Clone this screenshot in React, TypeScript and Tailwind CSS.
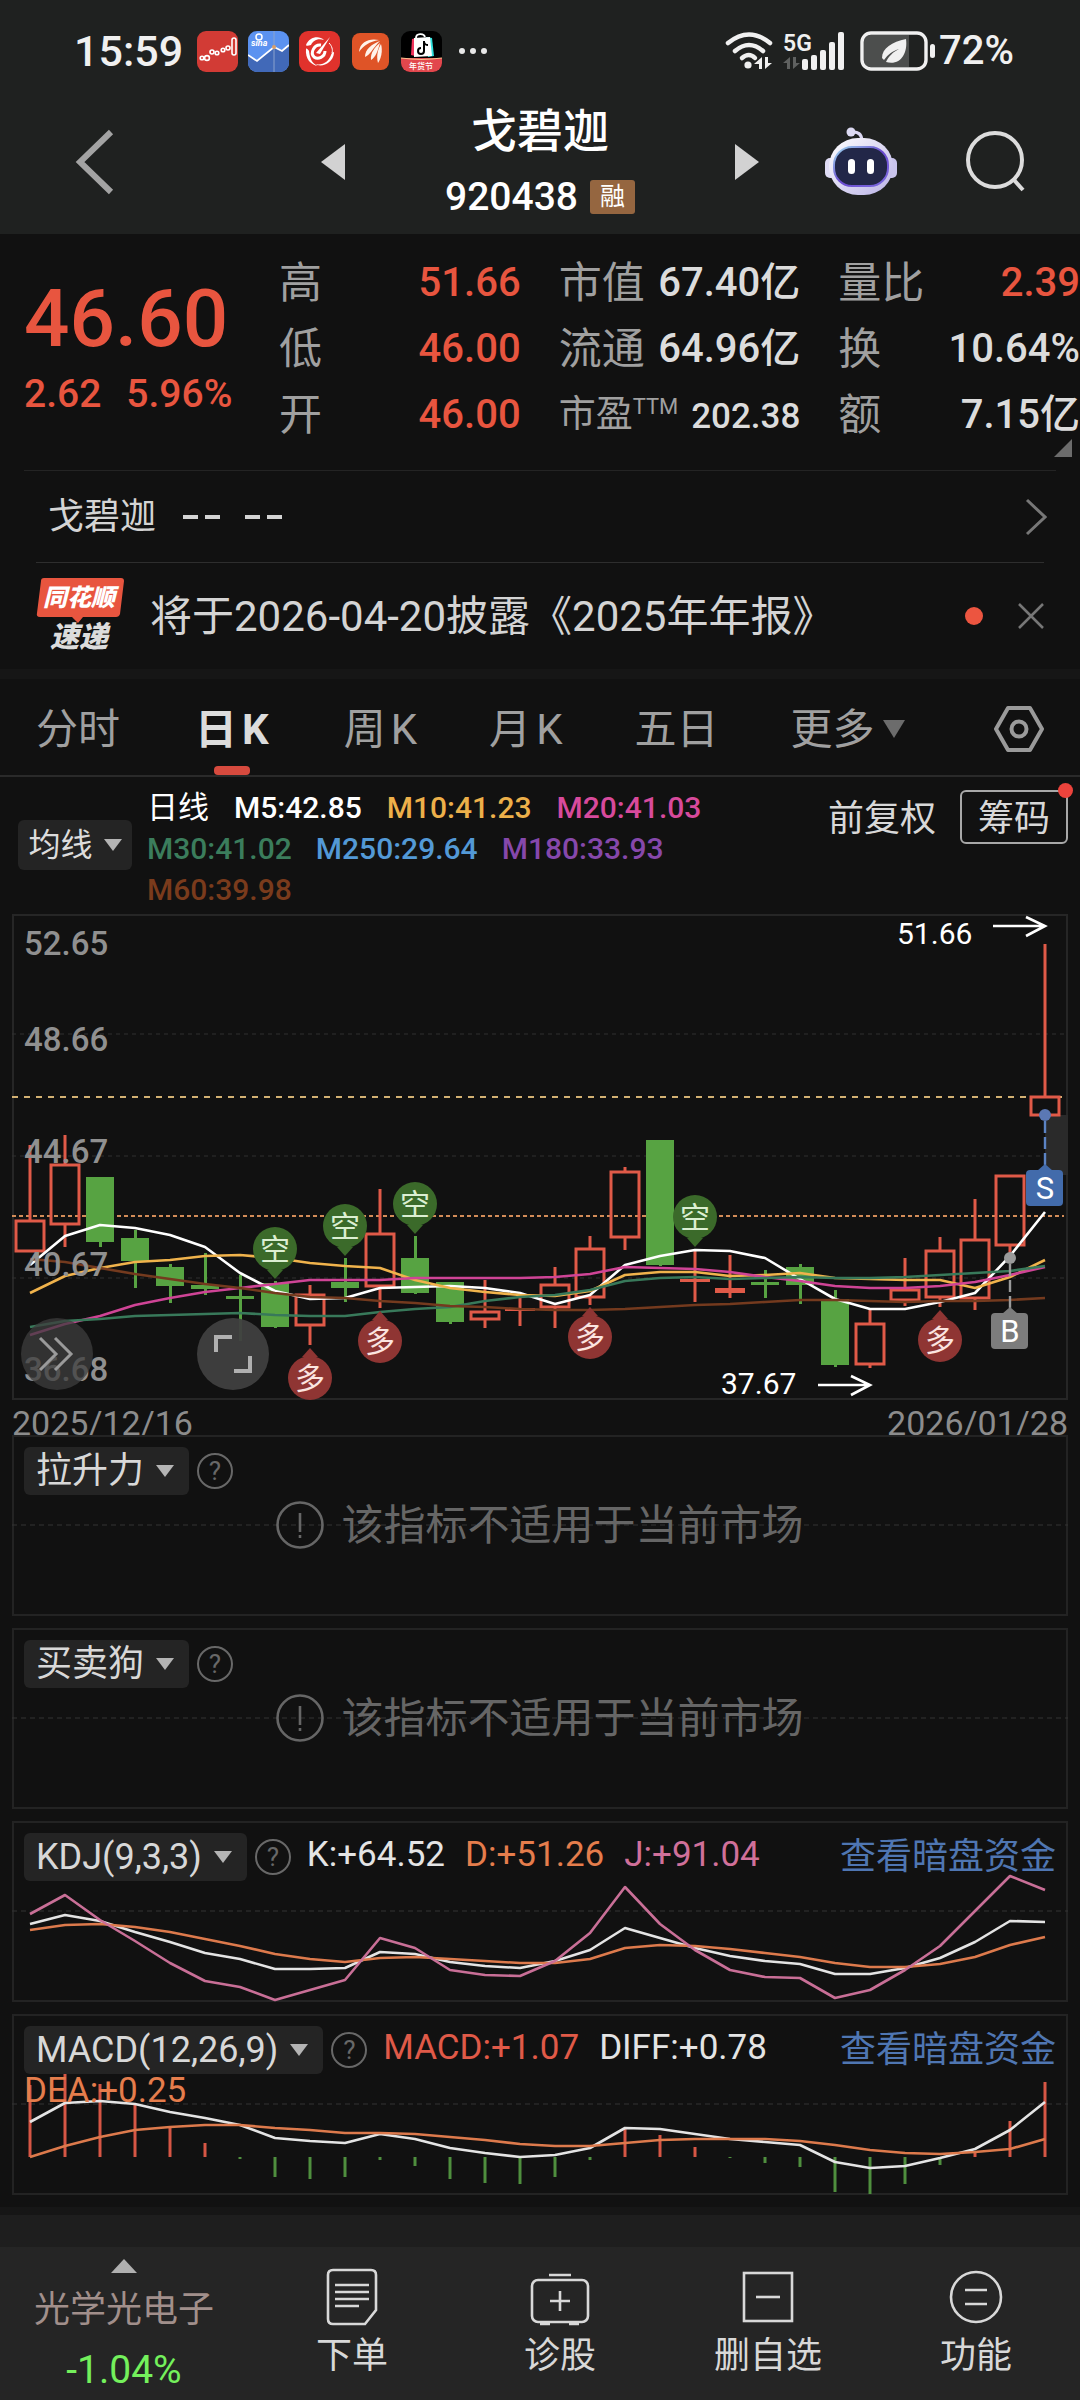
import type { ReactNode } from 'react';

// [up, high, bodyTop, bodyBottom, low] in chart units
const CANDLES: [boolean, number, number, number, number][] = [
  [true, 231, 306, 338, 338],
  [true, 221, 250, 311, 333],
  [false, 263, 263, 328, 333],
  [false, 316, 324, 347, 374],
  [false, 350, 353, 372, 389],
  [false, 339, 371, 375, 381],
  [false, 361, 382, 385, 427],
  [false, 367, 369, 413, 414],
  [true, 371, 380, 412, 431],
  [false, 344, 368, 374, 388],
  [true, 275, 319, 373, 394],
  [false, 322, 344, 379, 380],
  [false, 368, 368, 408, 410],
  [true, 366, 397, 406, 414],
  [true, 382, 394, 397, 412],
  [true, 353, 370, 394, 414],
  [true, 322, 334, 384, 391],
  [true, 253, 257, 324, 336],
  [false, 226, 226, 351, 352],
  [true, 337, 365, 368, 388],
  [true, 341, 374, 379, 384],
  [false, 356, 368, 371, 384],
  [false, 350, 353, 371, 390],
  [false, 376, 385, 451, 453],
  [true, 396, 409, 451, 454],
  [true, 344, 375, 387, 392],
  [true, 323, 336, 384, 393],
  [true, 285, 325, 385, 396],
  [true, 261, 261, 332, 342],
  [true, 30, 182, 202, 202],
];

const MA_LINES = [
  { color: '#fff', ys: [351,322,311,314,321,333,359,377,385,384,374,373,372,374,379,390,381,351,342,336,337,344,365,385,395,395,388,379,342,298] },
  { color: '#f0b34c', ys: [379,362,354,348,346,342,341,344,349,352,354,366,374,378,381,382,377,361,358,358,362,361,359,364,365,366,366,374,363,346] },
  { color: '#cf4496', ys: [421,410,402,391,384,378,374,370,366,366,366,364,364,364,364,363,360,353,354,355,358,363,367,372,374,374,372,368,361,353] },
  { color: '#38795a', ys: [413,407,405,402,401,400,399,401,402,402,398,395,393,387,383,381,376,367,364,363,365,364,363,364,364,363,361,359,357,352] },
  { color: '#743a1e', ys: [345,348,354,360,365,370,374,379,383,384,387,389,392,393,395,396,396,395,393,391,390,388,386,386,387,388,387,387,386,384] },
];

const KDJ_LINES = [
  { color: '#e4e4e4', ys: [103,94,100,111,121,132,138,148,148,147,131,133,141,145,147,140,129,107,117,127,135,140,143,153,153,147,137,121,100,101] },
  { color: '#dd7a4c', ys: [109,104,103,106,111,118,125,133,138,141,137,136,138,140,142,142,138,127,124,125,128,132,136,142,146,146,143,136,124,116] },
  { color: '#c96f97', ys: [93,74,99,120,142,160,166,179,169,159,117,127,149,154,155,140,112,66,103,129,149,156,157,177,169,149,125,90,55,69] },
];

const MACD_LINES = [
  { color: '#e4e4e4', ys: [108,89,87,90,98,104,111,124,127,129,120,125,134,139,143,141,134,114,115,120,125,128,131,148,154,152,144,135,116,88] },
  { color: '#dd7a4c', ys: [143,132,123,116,113,111,111,114,116,119,119,120,123,126,130,132,132,129,126,125,125,125,127,131,136,139,140,138,135,125] },
];
const MACD_BARS = [71,53,70,90,113,129,145,163,165,163,146,152,165,169,170,163,146,115,121,133,144,149,153,178,180,170,151,137,107,68];
const MACD_ZERO = 143;

const RED = '#e05a48';
const GREEN = '#57a342';

const cx = (i: number) => 18 + 35 * i;
const toPoints = (ys: number[]) => ys.map((y, i) => `${cx(i)},${y}`).join(' ');

function Lines({ lines }: { lines: { color: string; ys: number[] }[] }) {
  return (
    <>
      {lines.map(l => (
        <polyline key={l.color} points={toPoints(l.ys)} fill="none" stroke={l.color} strokeWidth="2.6" strokeLinejoin="round" />
      ))}
    </>
  );
}

function AppIcons() {
  return (
    <div className="flex items-center gap-[10px]">
      <svg viewBox="0 0 41 41" className="w-[41px] h-[41px]">
        <rect width="41" height="41" rx="9" fill="#d23b35" />
        <g fill="none" stroke="#fff" strokeWidth="1.6">
          <circle cx="5" cy="27" r="1.8" /><circle cx="10" cy="27" r="2.4" /><circle cx="15" cy="21" r="2" />
          <circle cx="20" cy="22" r="1.8" /><circle cx="26" cy="19" r="1.8" /><circle cx="31" cy="17" r="2" />
          <rect x="35" y="7" width="4" height="17" rx="2" />
        </g>
      </svg>
      <svg viewBox="0 0 41 41" className="w-[41px] h-[41px]">
        <rect width="41" height="41" rx="9" fill="#5b92f0" />
        <path d="M0 24l9 6 17-14 8 4 7-6v18a9 9 0 0 1-9 9H9a9 9 0 0 1-9-9z" fill="#4169b8" />
        <path d="M0 24l9 6 17-14 8 4 7-6" fill="none" stroke="#fff" strokeWidth="1.8" />
        <path d="M26 0v41" stroke="#8ba3cd" strokeWidth="1" />
        <circle cx="26" cy="16" r="2" fill="#d9a06a" />
        <circle cx="11" cy="6" r="3" fill="none" stroke="#fff" strokeWidth="1.5" />
        <text x="3" y="15" fontSize="9" fontWeight="700" fontStyle="italic" fill="#fff">sina</text>
      </svg>
      <svg viewBox="0 0 41 41" className="w-[41px] h-[41px]">
        <rect width="41" height="41" rx="9" fill="#e0322c" />
        <path d="M7 14C10 6 20 4 25 9c-7-2-11 1-13 5-3 1-5 1-5 0z" fill="#fff" />
        <path d="M7 18c-1 10 5 16 12 17-5-2-8-6-9-15-1-2-3-3-3-2z" fill="#fff" />
        <path d="M35 22c-1 10-12 15-19 11 8 2 14-3 16-9 1-3 3-4 3-2z" fill="#fff" />
        <path d="M22 14c-7-1-11 8-7 12 4 3 11 0 11-6" fill="none" stroke="#fff" strokeWidth="3" />
        <path d="M31 6L21 23l-4-1z" fill="#fff" />
        <path d="M30 12c3 3 4 7 3 10" fill="none" stroke="#fff" strokeWidth="1" />
      </svg>
      <svg viewBox="0 0 41 41" className="w-[41px] h-[41px]">
        <rect x="2" y="2" width="37" height="37" rx="8" fill="#df5427" />
        <g fill="#fff3ea">
          <path d="M29 9c-9-2-19 1-20 12 5-7 10-10 20-12z" />
          <path d="M30 10c-8 3-15 8-15 16 5-2 8-9 15-16z" />
          <path d="M30 12c-5 4-10 10-9 17 5-3 7-10 9-17z" />
          <path d="M31 13c-3 5-5 12-3 19 3-4 5-12 3-19z" />
        </g>
      </svg>
      <svg viewBox="0 0 41 41" className="w-[41px] h-[41px]">
        <rect width="41" height="41" rx="9" fill="#000" />
        <path d="M25 6l6 1 2 18-6 1z" fill="#2ee0dc" />
        <path d="M11 8l4-1-1 18-4-1z" fill="#f0355c" />
        <path d="M13 7l16-1 2 19-18 1z" fill="#fff" />
        <path d="M15 7c0-5 8-5 9-1" fill="none" stroke="#fff" strokeWidth="1.8" />
        <path d="M23 10v10a3 3 0 1 1-3-3M23 11c1 3 2 3 4 3" fill="none" stroke="#000" strokeWidth="2" />
        <path d="M0 27h41v5a9 9 0 0 1-9 9H9a9 9 0 0 1-9-9z" fill="#e2474d" />
        <path d="M0 27q20 3 41 0" fill="none" stroke="#f4c28e" strokeWidth="1.2" />
        <text x="20" y="38" fontSize="8" fontWeight="500" textAnchor="middle" fill="#fff">年货节</text>
      </svg>
    </div>
  );
}

function StatusBar() {
  return (
    <div className="flex h-[102px] items-center pl-[74px] pr-[66px] text-[#f0f0f0]">
      <span className="mr-[14px] text-[43px] font-medium leading-none">15:59</span>
      <AppIcons />
      <svg viewBox="0 0 30 8" className="ml-[16px] w-[30px] h-[8px]" fill="#e8e8e8">
        <circle cx="4" cy="4" r="3" /><circle cx="15" cy="4" r="3" /><circle cx="26" cy="4" r="3" />
      </svg>

      <svg viewBox="0 0 48 40" className="ml-auto w-[48px] h-[40px]">
        <g fill="none" stroke="#f0f0f0" strokeWidth="4.5" strokeLinecap="round">
          <path d="M3 12q21-17 42 0" />
          <path d="M10 20q14-12 28 0" />
          <path d="M17 27q7-6 13 0" />
        </g>
        <circle cx="23" cy="34" r="3.6" fill="#f0f0f0" />
        <path d="M37 26v12h-3v-5h-5zM40 26v12l7-6h-4v-6z" fill="#f0f0f0" />
      </svg>
      <svg viewBox="0 0 64 40" className="ml-[10px] w-[64px] h-[40px]">
        <text x="0" y="20" fontSize="23" fontWeight="600" fill="#f0f0f0">5G</text>
        <path d="M7 26v12H4v-6H0zM10 26v12l7-6h-4v-6z" fill="#5f6160" />
        <g fill="#f0f0f0">
          <rect x="19" y="28" width="6" height="11" rx="2" />
          <rect x="28" y="24" width="6" height="15" rx="2" />
          <rect x="37" y="19" width="6" height="20" rx="2" />
          <rect x="46" y="11" width="6" height="28" rx="2" />
          <rect x="55" y="1" width="6" height="38" rx="2" />
        </g>
      </svg>
      <svg viewBox="0 0 76 40" className="ml-[13px] w-[76px] h-[40px]">
        <path d="M10 4h39v32H10a6 6 0 0 1-6-6V10a6 6 0 0 1 6-6z" fill="#4c4e4d" />
        <rect x="2" y="2" width="64" height="36" rx="9" fill="none" stroke="#f0f0f0" strokeWidth="3.4" />
        <rect x="70" y="13" width="5" height="14" rx="2.5" fill="#f0f0f0" />
        <path d="M46 8C32 11 22 17 22 27l2 2c4-6 9-9 15-11-6 3-10 7-13 13 14 4 22-8 20-23z" fill="#f0f0f0" />
      </svg>
      <span className="ml-[3px] text-[40px] font-medium leading-none">72%</span>
    </div>
  );
}

function NavBar() {
  return (
    <nav className="grid grid-cols-[321px_1fr_321px] items-center h-[132px]">
      <button aria-label="返回" className="ml-[74px] w-[42px] pb-[12px]">
        <svg viewBox="0 0 42 66" className="w-[42px] h-[66px]" fill="none" stroke="#a3a3a3" strokeWidth="6">
          <path d="M37 3L6 33l31 30" />
        </svg>
      </button>
      <div className="flex items-center justify-between">
        <button aria-label="上一只" className="pb-[12px]">
          <svg viewBox="0 0 24 36" className="w-[24px] h-[36px]" fill="#d2d2d2"><path d="M24 0v36L0 18z" /></svg>
        </button>
        <div className="flex flex-col items-center text-white">
          <h1 className="text-[46px] font-medium leading-[58px]">戈碧迦</h1>
          <div className="flex items-center gap-[12px]">
            <span className="text-[39px] font-medium leading-[74px]">920438</span>
            <span className="rounded-[3px] bg-[#956640] px-[10px] text-[25px] leading-[34px]">融</span>
          </div>
        </div>
        <button aria-label="下一只" className="pb-[12px]">
          <svg viewBox="0 0 24 36" className="w-[24px] h-[36px]" fill="#d2d2d2"><path d="M0 0v36l24-18z" /></svg>
        </button>
      </div>
      <div className="flex items-center pb-[14px] pl-[66px]">
        <button aria-label="智能助手">
          <svg viewBox="0 0 72 68" className="w-[72px] h-[68px]">
            <defs>
              <linearGradient id="shell" x1="0" y1="0" x2="1" y2="1">
                <stop offset="0" stopColor="#fff" /><stop offset="1" stopColor="#b9b2e6" />
              </linearGradient>
              <linearGradient id="rim" x1="0" y1="0" x2="1" y2="1">
                <stop offset="0" stopColor="#9fdcf0" /><stop offset=".5" stopColor="#6b4bd0" /><stop offset="1" stopColor="#7a6be0" />
              </linearGradient>
            </defs>
            <path d="M27 5q9-1 10 8" fill="none" stroke="#dcd8f3" strokeWidth="3" />
            <circle cx="26" cy="5" r="4.5" fill="#dcdaf2" />
            <rect x="0" y="31" width="12" height="20" rx="5" fill="#dfdcf5" />
            <rect x="60" y="31" width="12" height="20" rx="5" fill="#c9c4ec" />
            <rect x="4" y="11" width="64" height="57" rx="29" fill="url(#shell)" />
            <rect x="9" y="20" width="54" height="39" rx="18" fill="#222748" stroke="url(#rim)" strokeWidth="2" />
            <rect x="23" y="32" width="7" height="15" rx="3.5" fill="#fff" />
            <rect x="42" y="32" width="7" height="15" rx="3.5" fill="#fff" />
          </svg>
        </button>
        <button aria-label="搜索" className="ml-[69px]">
          <svg viewBox="0 0 62 62" className="w-[62px] h-[62px]" fill="none" stroke="#dcdcdc" strokeWidth="4">
            <circle cx="29" cy="30" r="27" /><path d="M48 50l9 10" />
          </svg>
        </button>
      </div>
    </nav>
  );
}

function Stat({ label, red, children }: { label: ReactNode; red?: boolean; children: ReactNode }) {
  return (
    <div className="flex h-[66px] items-center justify-between whitespace-nowrap text-[40px]">
      <dt className="text-[43px] text-[#a0a0a0]">{label}</dt>
      <dd className={red ? 'font-medium text-[#e8553f]' : 'font-medium text-[#dcdcdc]'}>{children}</dd>
    </div>
  );
}

function Quote() {
  return (
    <section className="relative flex pb-[22px]">
      <div className="w-[279px] shrink-0 pl-[24px] pt-[40px] text-[#e8553f]">
        <div className="text-[80px] font-medium leading-[90px]">46.60</div>
        <div className="flex gap-[25px] text-[39px] font-medium leading-[60px]"><span>2.62</span><span>5.96%</span></div>
      </div>
      <dl className="grid flex-1 grid-cols-3 gap-x-[38px] pt-[16px]">
        <Stat label="高" red>51.66</Stat>
        <Stat label="市值">67.40亿</Stat>
        <Stat label="量比" red>2.39</Stat>
        <Stat label="低" red>46.00</Stat>
        <Stat label="流通">64.96亿</Stat>
        <Stat label="换">10.64%</Stat>
        <Stat label="开" red>46.00</Stat>
        <Stat label={<span className="flex text-[37px] leading-[48px]">市盈<span className="text-[22px] leading-[32px]">TTM</span></span>}>
          <span className="text-[35px]">202.38</span>
        </Stat>
        <Stat label="额">7.15亿</Stat>
      </dl>
      <svg viewBox="0 0 18 18" className="absolute bottom-[13px] right-[8px] w-[18px] h-[18px]" fill="#6c6c6c"><path d="M18 0v18H0z" /></svg>
    </section>
  );
}

function Notices() {
  return (
    <section>
      <a href="#stock" className="mx-[24px] flex h-[92px] items-center border-t border-[#242424] pl-[24px] pr-[9px] text-[36px] text-[#d4d4d4]">
        <span>戈碧迦</span>
        <svg viewBox="0 0 100 6" className="ml-[27px] w-[100px] h-[6px]" fill="#d4d4d4">
          <path d="M0 1h15v4H0zM22 1h15v4H22zM62 1h15v4H62zM84 1h15v4H84z" />
        </svg>
        <svg viewBox="0 0 22 38" className="ml-auto w-[22px] h-[38px]" fill="none" stroke="#777" strokeWidth="3"><path d="M2 2l18 17L2 36" /></svg>
      </a>
      <div className="mx-[36px] flex h-[107px] items-center border-t border-[#2e2e2e]">
        <svg viewBox="0 -6 88 88" className="w-[88px] h-[88px] overflow-visible" fontWeight="900" fontStyle="italic">
          <path d="M8 0h77q3 0 3 3l-4 33q-1 3-4 3H47l-5 6-6-6H4q-4 0-3-4L5 3q0-3 3-3z" fill="#e8553f" />
          <text x="43" y="28" fontSize="24" textAnchor="middle" fill="#fff">同花顺</text>
          <text x="43" y="69" fontSize="29" textAnchor="middle" fill="#dcdcdc">速递</text>
        </svg>
        <span className="ml-[26px] text-[42px] text-[#d4d4d4]">将于2026-04-20披露《2025年年报》</span>
        <span className="ml-auto size-[18px] rounded-full bg-[#ec5540]" />
        <button aria-label="关闭" className="ml-[35px]">
          <svg viewBox="0 0 26 26" className="size-[26px]" stroke="#777" strokeWidth="2.5"><path d="M1 1l24 24M25 1L1 25" /></svg>
        </button>
      </div>
    </section>
  );
}

const TABS: ReactNode[] = [
  '分时',
  <>日<span className="ml-[5px]">K</span></>,
  <>周<span className="ml-[5px]">K</span></>,
  <>月<span className="ml-[5px]">K</span></>,
  '五日',
];
const ACTIVE_TAB = 1;

function PeriodTabs() {
  return (
    <div role="tablist" className="flex h-[98px] items-center gap-[72px] border-b-2 border-[#2a2a2a] px-[36px] text-[42px] text-[#a0a0a0]">
      {TABS.map((t, i) => (
        <button key={i} role="tab" aria-selected={i === ACTIVE_TAB} className={i === ACTIVE_TAB ? 'relative h-full px-[3px] pt-[4px] font-bold text-[#dcdcdc]' : 'h-full pt-[4px]'}>
          {t}
          {i === ACTIVE_TAB && <span className="absolute bottom-0 left-1/2 h-[9px] w-[36px] -translate-x-1/2 rounded-[4px] bg-[#d64a3e]" />}
        </button>
      ))}
      <button className="flex h-full items-center gap-[8px] pt-[4px]">
        更多
        <svg viewBox="0 0 22 18" className="w-[22px] h-[18px]" fill="#6c6c6c"><path d="M0 0h22L11 18z" /></svg>
      </button>
      <button aria-label="设置" className="ml-auto pt-[4px]">
        <svg viewBox="0 0 50 48" className="w-[50px] h-[48px]" fill="none" stroke="#9a9a9a" strokeWidth="4" strokeLinejoin="round">
          <path d="M14 3h22l12 21-12 21H14L2 24z" /><circle cx="25" cy="24" r="7.5" />
        </svg>
      </button>
    </div>
  );
}

function DownArrow() {
  return <svg viewBox="0 0 18 12" className="w-[18px] h-[12px]" fill="#b4b4b4"><path d="M0 0h18L9 12z" /></svg>;
}

function Legend() {
  return (
    <div className="flex pb-[4px] pl-[18px] pr-[12px] text-[30px] font-medium">
      <button className="mt-[43px] flex h-[50px] w-[114px] items-center justify-center gap-[11px] rounded-[6px] bg-[#242424] text-[32px] font-normal text-[#dcdcdc]">
        均线<DownArrow />
      </button>
      <div className="ml-[15px] flex-1 whitespace-nowrap pt-[10px] leading-[41px]">
        <div className="flex gap-[25px] text-white">
          <span className="text-[31px] font-normal">日线</span>
          <span>M5:42.85</span>
          <span className="text-[#edb04a]">M10:41.23</span>
          <span className="text-[#d84a9c]">M20:41.03</span>
        </div>
        <div className="flex gap-[24px]">
          <span className="text-[#3b7d5c]">M30:41.02</span>
          <span className="text-[#5399d6]">M250:29.64</span>
          <span className="text-[#8648ab]">M180:33.93</span>
        </div>
        <div className="text-[#7a3b1c]">M60:39.98</div>
      </div>
      <div className="mt-[13px] flex h-[54px] items-center gap-[24px] text-[36px] font-normal text-[#d8d8d8]">
        <button className="pt-[3px]">前复权</button>
        <button className="relative h-full w-[108px] rounded-[6px] border-2 border-[#a8a8a8]">
          筹码
          <span className="absolute -right-[7px] -top-[9px] size-[15px] rounded-full bg-[#ec433c]" />
        </button>
      </div>
    </div>
  );
}

function Pin({ i, y, short }: { i: number; y: number; short?: boolean }) {
  const x = cx(i);
  const d = short
    ? `M${x} ${y + 30}l-8-9h16z`
    : `M${x} ${y - 30}l-8 9h16z`;
  return (
    <g fill={short ? '#3b6a2a' : '#8f3533'}>
      <circle cx={x} cy={y} r="22" />
      <path d={d} />
      <text x={x} y={y + 11} fontSize="30" textAnchor="middle" fill={short ? '#dcefd2' : '#fbe4e0'}>
        {short ? '空' : '多'}
      </text>
    </g>
  );
}

function KLineChart() {
  return (
    <svg viewBox="0 0 1056 486" className="block w-full" role="img" aria-label="日K线图">
      <rect x="1" y="1" width="1054" height="484" fill="none" stroke="#262626" strokeWidth="2" />
      <g stroke="#303030" strokeDasharray="4 4">
        <path d="M0 120h1056M0 242h1056M0 364h1056" />
      </g>
      <path d="M0 183h1052" stroke="#d3b173" strokeWidth="2" strokeDasharray="6 6" />
      <path d="M0 302h1052" stroke="#d38c58" strokeWidth="2" strokeDasharray="4 3" />
      <rect x="1033" y="201" width="23" height="60" fill="#2a2a2a" />

      {CANDLES.map(([up, high, top, bottom, low], i) => up ? (
        <g key={i} stroke={RED} strokeWidth="3" fill="none">
          <path d={`M${cx(i)} ${high}V${top}M${cx(i)} ${bottom}V${low}`} />
          {bottom - top < 6
            ? <rect x={cx(i) - 15} y={top} width="30" height={bottom - top} fill={RED} stroke="none" />
            : <rect x={cx(i) - 14} y={top + 1} width="28" height={bottom - top - 2} />}
        </g>
      ) : (
        <g key={i} fill={GREEN}>
          <rect x={cx(i) - 1} y={high} width="3" height={low - high} />
          <rect x={cx(i) - 14} y={top} width="28" height={bottom - top} />
        </g>
      ))}

      <Lines lines={MA_LINES} />

      <g fontSize="33" fontWeight="500" fill="#909090">
        <text x="12" y="41">52.65</text>
        <text x="12" y="137">48.66</text>
        <text x="12" y="249">44.67</text>
        <text x="12" y="362">40.67</text>
        <text x="12" y="467">36.68</text>
      </g>

      <Pin i={7} y={335} short />
      <Pin i={9} y={312} short />
      <Pin i={11} y={290} short />
      <Pin i={19} y={303} short />
      <Pin i={8} y={464} />
      <Pin i={10} y={427} />
      <Pin i={16} y={423} />
      <Pin i={26} y={426} />

      <g fill="#fff" fontSize="30">
        <text x="885" y="30">51.66</text>
        <text x="709" y="480">37.67</text>
      </g>
      <path d="M981 12h51M1014 3l19 9-19 10M806 471h51M839 462l19 9-19 10" fill="none" stroke="#fff" strokeWidth="2.6" />

      {/* trade marks */}
      <path d="M1033 207v49" stroke="#5b83c4" strokeWidth="2.4" strokeDasharray="12 4" />
      <circle cx="1033" cy="201" r="6" fill="#5b78b4" />
      <path d="M1033 250l8 7h-16z" fill="#426bab" />
      <rect x="1014" y="256" width="37" height="36" rx="4" fill="#426bab" />
      <path d="M998 350v49" stroke="#9a9a9a" strokeWidth="2.4" strokeDasharray="12 4" />
      <circle cx="998" cy="344" r="6" fill="#9a9a9a" />
      <path d="M998 393l8 7h-16z" fill="#7c7c7c" />
      <rect x="979" y="399" width="37" height="36" rx="4" fill="#7c7c7c" />
      <g fill="#fff" fontSize="31" textAnchor="middle">
        <text x="1033" y="285">S</text>
        <text x="998" y="428">B</text>
      </g>

      {/* floating controls */}
      <circle cx="45" cy="440" r="36" fill="#3e3e3e" fillOpacity=".75" />
      <path d="M28 424l16 16-16 16M43 424l16 16-16 16" fill="none" stroke="#9a9a9a" strokeWidth="3" />
      <circle cx="221" cy="440" r="36" fill="#404040" fillOpacity=".95" />
      <path d="M204 438v-15h16M238 442v15h-16" fill="none" stroke="#b0b0b0" strokeWidth="4" />
    </svg>
  );
}

function Panel({ name, values, link, extra, children }: { name: string; values?: ReactNode; link?: boolean; extra?: ReactNode; children?: ReactNode }) {
  return (
    <section className="relative mb-[12px] h-[181px] px-[12px] pt-[12px]">
      <svg viewBox="0 0 1056 181" className="absolute inset-0 w-full" aria-hidden="true">
        <rect x="1" y="1" width="1054" height="179" fill="none" stroke="#232323" strokeWidth="2" />
        <path d="M0 90h1056" stroke="#343434" strokeDasharray="5 4" />
        {children}
      </svg>
      <div className="relative flex items-center whitespace-nowrap">
        <button className="flex h-[48px] items-center gap-[12px] rounded-[6px] bg-[#242424] pl-[12px] pr-[15px] text-[36px] leading-[48px] text-[#d8d8d8]">
          {name}<DownArrow />
        </button>
        <button aria-label="指标说明" className="ml-[8px] size-[36px] rounded-full border-2 border-[#686868] text-[26px] leading-[32px] text-[#686868]">?</button>
        {values && <div className="ml-[16px] flex gap-[20px] pb-[4px] text-[35px] leading-[44px]">{values}</div>}
        {link && <a href="#funds" className="ml-auto text-[36px] leading-[48px] text-[#4f76b2]">查看暗盘资金</a>}
      </div>
      {extra}
    </section>
  );
}

function Unsupported({ name }: { name: string }) {
  return (
    <Panel
      name={name}
      extra={
        <div className="relative mt-[6px] flex h-[48px] items-center justify-center gap-[17px] text-[42px] text-[#666]">
          <svg viewBox="0 0 48 48" className="size-[48px]" fill="none" stroke="#666" strokeWidth="2.6">
            <circle cx="24" cy="24" r="22.5" /><path d="M24 12v19M24 34v3" />
          </svg>
          该指标不适用于当前市场
        </div>
      }
    />
  );
}

function BottomItem({ label, children }: { label: string; children: ReactNode }) {
  return (
    <button className="flex flex-1 flex-col items-center pt-[20px] text-[36px] leading-[50px] text-[#d8d8d8]">
      <svg viewBox="0 0 60 60" className="mb-[4px] size-[60px]" fill="none" stroke="#d8d8d8" strokeWidth="2.6">{children}</svg>
      {label}
    </button>
  );
}

function BottomBar() {
  return (
    <nav className="flex min-h-[153px] bg-[#252525]">
      <button className="flex w-[248px] flex-col items-center pt-[12px]">
        <svg viewBox="0 0 26 14" className="w-[26px] h-[14px]" fill="#b0b0b0"><path d="M13 0l13 14H0z" /></svg>
        <span className="mt-[6px] text-[36px] leading-[62px] text-[#a18f8b]">光学光电子</span>
        <span className="text-[39px] leading-[59px] text-[#74f05c]">-1.04%</span>
      </button>
      <BottomItem label="下单">
        <path d="M11 3h38q5 0 5 5v35L43 57H11q-5 0-5-5V8q0-5 5-5z" />
        <path d="M13 18h34M13 25h34M13 32h34M13 39h24" />
      </BottomItem>
      <BottomItem label="诊股">
        <rect x="2" y="13" width="56" height="42" rx="6" />
        <path d="M19 8h22M30 24v20M20 34h20M10 57h10M39 57h10" />
      </BottomItem>
      <BottomItem label="删自选">
        <rect x="6" y="6" width="48" height="48" /><path d="M18 30h24" />
      </BottomItem>
      <BottomItem label="功能">
        <circle cx="30" cy="30" r="25" /><path d="M19 23h22M19 37h22" />
      </BottomItem>
    </nav>
  );
}

export default function App() {
  return (
    <div className="min-h-screen bg-[#111] [font-family:Roboto,'Noto_Sans_CJK_SC',sans-serif]">
      <header className="bg-[#1f2120]">
        <StatusBar />
        <NavBar />
      </header>
      <Quote />
      <Notices />
      <div className="h-[10px] bg-[#161616]" />
      <PeriodTabs />
      <Legend />

      <main className="px-[12px]">
        <KLineChart />
        <div className="flex h-[35px] justify-between text-[34px] leading-[46px] text-[#8c8c8c]">
          <span>2025/12/16</span>
          <span>2026/01/28</span>
        </div>
        <Unsupported name="拉升力" />
        <Unsupported name="买卖狗" />
        <Panel
          name="KDJ(9,3,3)"
          link
          values={<>
            <span className="text-[#e4e4e4]">K:+64.52</span>
            <span className="text-[#e57d4c]">D:+51.26</span>
            <span className="text-[#d0709a]">J:+91.04</span>
          </>}
        >
          <Lines lines={KDJ_LINES} />
        </Panel>
        <Panel
          name="MACD(12,26,9)"
          link
          values={<>
            <span className="text-[#e05a48]">MACD:+1.07</span>
            <span className="text-[#e4e4e4]">DIFF:+0.78</span>
          </>}
          extra={<div className="relative text-[35px] leading-[34px] text-[#e57d4c]">DEA:+0.25</div>}
        >
          {MACD_BARS.map((y, i) => (
            <path key={i} d={`M${cx(i)} ${MACD_ZERO}V${y}`} stroke={y < MACD_ZERO ? '#d65645' : '#4f8f3e'} strokeWidth="3" />
          ))}
          <Lines lines={MACD_LINES} />
        </Panel>
      </main>

      <div className="h-[8px] bg-[#161616]" />
      <div className="h-[32px] bg-[#1e1e1e]" />
      <BottomBar />
    </div>
  );
}
